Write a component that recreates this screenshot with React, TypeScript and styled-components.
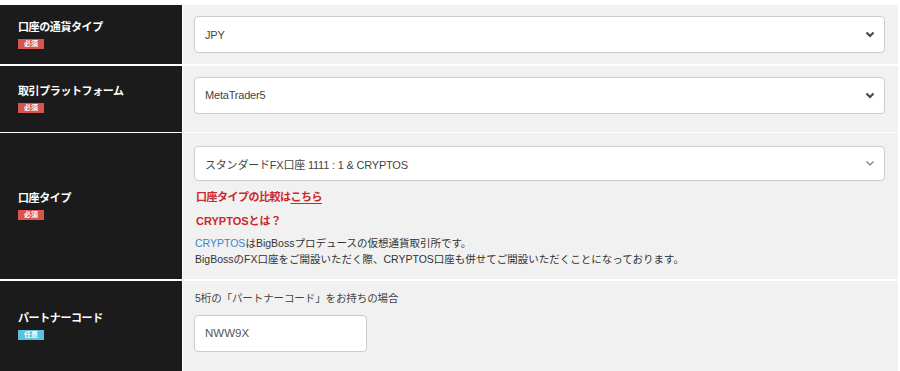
import React from 'react'
import styled, { createGlobalStyle } from 'styled-components'

const GlobalStyle = createGlobalStyle`
  html, body {
    margin: 0;
    padding: 0;
    background: #fff;
    overflow: hidden;
  }
  body {
    font-family: "Liberation Sans", "Noto Sans CJK JP", sans-serif;
    color: #333;
  }
`

const App: React.FC = () => {
  return (
    <>
      <GlobalStyle />
      <Form>
        <Row>
          <Label title="口座の通貨タイプ" required />
          <Field $top={11} $bottom={11}>
            <Select value="JPY" bold />
          </Field>
        </Row>
        <Row>
          <Label title="取引プラットフォーム" required />
          <Field $top={11} $bottom={18}>
            <Select value="MetaTrader5" bold />
          </Field>
        </Row>
        <Row>
          <Label title="口座タイプ" required />
          <Field $top={13} $bottom={12}>
            <Select value="スタンダードFX口座 1111 : 1 & CRYPTOS" $h={35} />
            <CompareLink>
              口座タイプの比較は<u>こちら</u>
            </CompareLink>
            <Heading>CRYPTOSとは？</Heading>
            <Note>
              <Blue>CRYPTOS</Blue>はBigBossプロデュースの仮想通貨取引所です。
              <br />
              BigBossのFX口座をご開設いただく際、CRYPTOS口座も併せてご開設いただくことになっております。
            </Note>
          </Field>
        </Row>
        <Row>
          <Label title="パートナーコード" />
          <Field $top={10} $bottom={19}>
            <Hint>5桁の「パートナーコード」をお持ちの場合</Hint>
            <Input>NWW9X</Input>
          </Field>
        </Row>
        <Row>
          <Label title="" />
          <Field $top={10} $bottom={10} />
        </Row>
      </Form>
    </>
  )
}

interface ILabel {
  title: string
  required?: boolean
}
const Label = ({ title, required }: ILabel) => (
  <LabelCell>
    {title && <LabelText>{title}</LabelText>}
    {title && <Badge $optional={!required}>{required ? '必須' : '任意'}</Badge>}
  </LabelCell>
)

interface ISelect {
  value: string
  bold?: boolean
  $h?: number
}
const Select = ({ value, bold, $h }: ISelect) => (
  <SelectBox $h={$h}>
    <span>{value}</span>
    <svg width="10" height="7" viewBox="0 0 10 7">
      <path
        d="M1.5 1.5 L5 5 L8.5 1.5"
        fill="none"
        stroke={bold ? '#444' : '#777'}
        strokeWidth={bold ? 2 : 1.1}
      />
    </svg>
  </SelectBox>
)

const Form = styled.div`
  width: 898px;
  padding-top: 5px;
  display: flex;
  flex-direction: column;
  gap: 1.5px;
`

const Row = styled.div`
  display: grid;
  grid-template-columns: 182px 1fr;
  column-gap: 1px;
`

const LabelCell = styled.div`
  background: #1b1b1b;
  display: flex;
  flex-direction: column;
  justify-content: center;
  padding-left: 18px;
  gap: 5px;
`

const LabelText = styled.div`
  color: #fff;
  font-size: 11px;
  font-weight: bold;
  letter-spacing: -0.4px;
  line-height: 13px;
`

const Badge = styled.span<{ $optional?: boolean }>`
  display: inline-flex;
  align-items: center;
  justify-content: center;
  width: 26px;
  height: 10px;
  background: ${(p) => (p.$optional ? '#5bc0de' : '#d9534f')};
  color: #fff;
  font-size: 7px;
  font-weight: bold;
  line-height: 10px;
`

const Field = styled.div<{ $top: number; $bottom: number }>`
  background: #f1f1f1;
  padding: ${(p) => p.$top}px 13px ${(p) => p.$bottom}px 11px;
  display: flex;
  flex-direction: column;
  align-items: flex-start;
`

const SelectBox = styled.div<{ $h?: number }>`
  box-sizing: border-box;
  width: 100%;
  height: ${(p) => p.$h ?? 37}px;
  background: #fff;
  border: 1px solid #ccc;
  border-radius: 4px;
  display: flex;
  align-items: center;
  justify-content: space-between;
  padding: 0 9px 0 10px;
  font-size: 11px;
  letter-spacing: -0.2px;
  color: #444;
`

const CompareLink = styled.div`
  margin-top: 9px;
  color: #c9282d;
  font-size: 11px;
  font-weight: bold;
  letter-spacing: -0.5px;
  line-height: 14px;
  padding-left: 2px;

  u {
    text-underline-offset: 2px;
  }
`

const Heading = styled.div`
  margin-top: 10px;
  color: #c9282d;
  font-size: 11px;
  font-weight: bold;
  line-height: 14px;
  padding-left: 2px;
`

const Note = styled.div`
  margin-top: 7px;
  font-size: 10.5px;
  line-height: 16px;
  color: #333;
  padding-left: 1px;
`

const Blue = styled.span`
  color: #3a87d0;
`

const Hint = styled.div`
  font-size: 10.5px;
  letter-spacing: -0.1px;
  line-height: 14px;
  color: #444;
  padding-left: 1px;
`

const Input = styled.div`
  box-sizing: border-box;
  margin-top: 10px;
  width: 173px;
  height: 37px;
  background: #fff;
  border: 1px solid #ccc;
  border-radius: 4px;
  display: flex;
  align-items: center;
  padding-left: 10px;
  font-size: 11.5px;
  color: #555;
`

export default App
